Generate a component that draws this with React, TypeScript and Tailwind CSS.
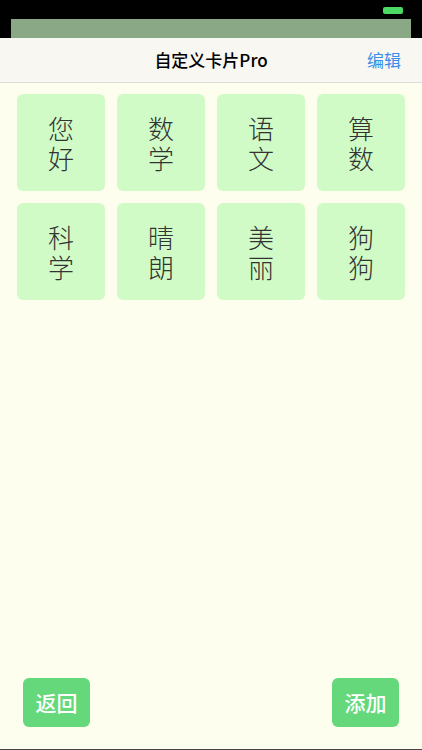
import React from 'react';

const cards = ['您好', '数学', '语文', '算数', '科学', '晴朗', '美丽', '狗狗'];

const font = { fontFamily: '"Noto Sans CJK SC", "Noto Sans", sans-serif' };

export default function App() {
  return (
    <div className="w-[422px] h-[750px] flex flex-col bg-[#fefeee] overflow-hidden" style={font}>
      {/* status bar */}
      <div className="h-[19px] bg-black flex justify-end items-start pr-[19px] pt-[7px] shrink-0">
        <div className="w-[20px] h-[7px] rounded-[2px] bg-[#4cd964]" />
      </div>
      <div className="h-[19px] bg-black px-[11px] shrink-0">
        <div className="h-full bg-[#8aa886]" />
      </div>

      {/* nav */}
      <div className="h-[45px] shrink-0 bg-[#f8f7f1] border-b border-[#dcdbd5] relative flex items-center justify-center">
        <span className="text-[17px] font-medium text-black">自定义卡片Pro</span>
        <span className="absolute right-[21px] text-[17px] text-[#3b8ee8]">编辑</span>
      </div>

      {/* grid */}
      <div className="grid grid-cols-4 gap-[12px] px-[17px] pt-[11px]">
        {cards.map((c) => (
          <div
            key={c}
            className="h-[97px] rounded-[6px] bg-[#d0fbc6] flex items-center justify-center"
          >
            <span className="w-[26px] text-[26px] leading-[30px] text-[#333] font-light text-center break-all">
              {c}
            </span>
          </div>
        ))}
      </div>

      <div className="flex-1" />

      {/* bottom buttons */}
      <div className="flex justify-between px-[23px] pb-[22px]">
        <button className="w-[67px] h-[49px] rounded-[6px] bg-[#64d87b] text-white text-[21px] font-medium">返回</button>
        <button className="w-[67px] h-[49px] rounded-[6px] bg-[#64d87b] text-white text-[21px] font-medium">添加</button>
      </div>
      <div className="h-[1px] bg-[#444] shrink-0" />
    </div>
  );
}
